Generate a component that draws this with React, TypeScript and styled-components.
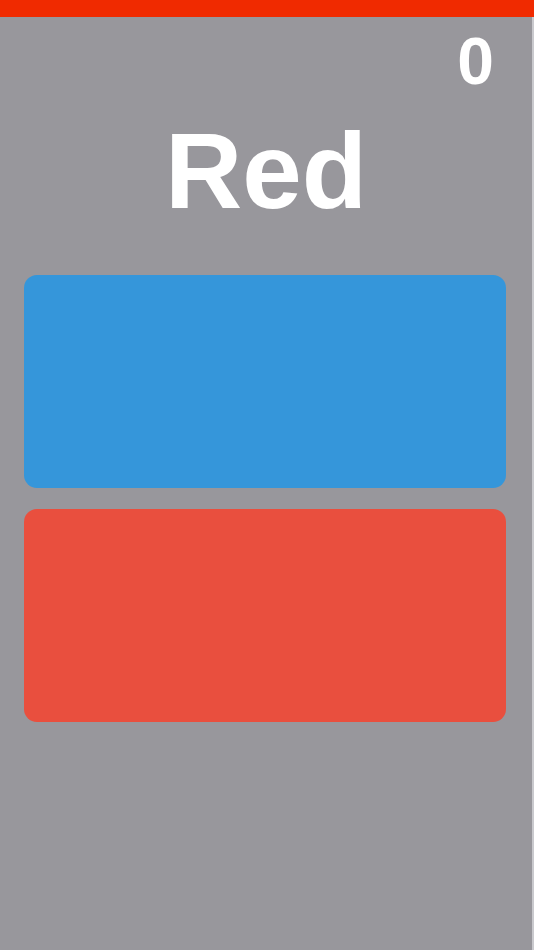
import styled, { createGlobalStyle } from "styled-components";

const GlobalStyle = createGlobalStyle`
  html, body {
    margin: 0;
    padding: 0;
    background: #98979c;
  }
  body {
    font-family: "Liberation Sans", Arial, sans-serif;
  }
`;

const TopBar = styled.div`
  height: 17px;
  background: #f02a00;
`;

// game screen: colour word on top, two answer cards below
const Screen = styled.div`
  width: 532px;
  min-height: 933px;
  background: #98979c;
  border-right: 2px solid #c9c9cd;
  display: flex;
  flex-direction: column;
`;

const Score = styled.div`
  margin-top: 11px;
  padding-right: 38px;
  text-align: right;
  font-size: 66px;
  line-height: 1;
  font-weight: bold;
  color: #ffffff;
`;

const Word = styled.h1`
  margin: 24px 0 0;
  text-align: center;
  font-size: 107px;
  line-height: 1;
  font-weight: bold;
  color: #ffffff;
`;

const Cards = styled.div`
  margin-top: 50px;
  padding: 0 26px 0 24px;
  display: flex;
  flex-direction: column;
  gap: 21px;
`;

const ColorCard = styled.button<{ $color: string }>`
  height: 213px;
  border: none;
  padding: 0;
  border-radius: 13px;
  background: ${(p) => p.$color};
  cursor: pointer;
`;

export default function App() {
  return (
    <>
      <GlobalStyle />
      <TopBar />
      <Screen>
        <Score>0</Score>
        <Word>Red</Word>
        <Cards>
          <ColorCard $color="#3596da" aria-label="blue" />
          <ColorCard $color="#e94f3e" aria-label="red" />
        </Cards>
      </Screen>
    </>
  );
}
